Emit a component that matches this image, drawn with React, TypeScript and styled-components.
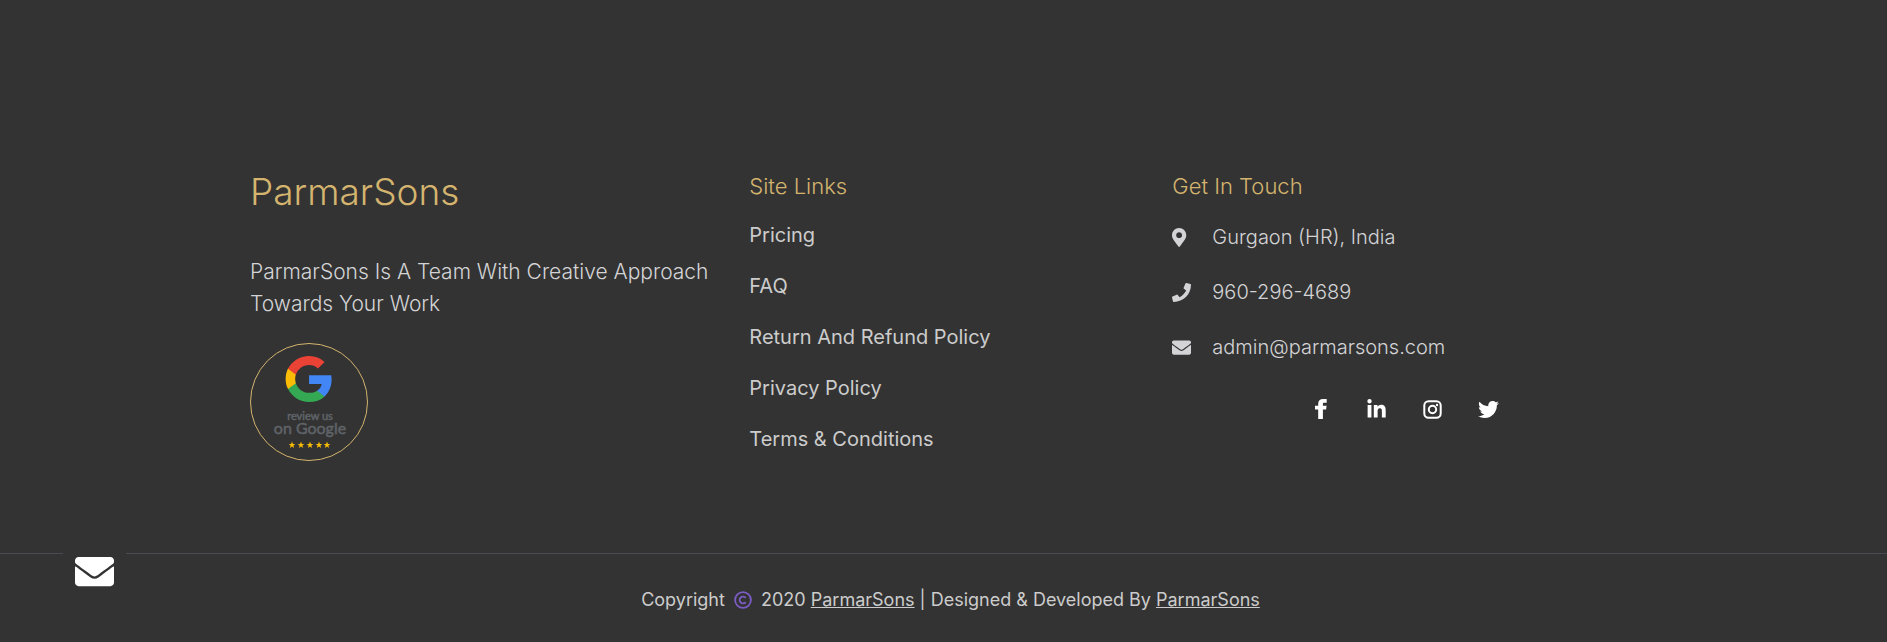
import React from "react";
import styled, { createGlobalStyle } from "styled-components";
import { FaMapMarkerAlt, FaPhone, FaEnvelope, FaLinkedinIn, FaTwitter } from "react-icons/fa";

const GlobalStyle = createGlobalStyle`
  * { box-sizing: border-box; }
  body {
    margin: 0;
    background: #333;
    color: #d4d4d6;
    font-family: Inter, "Liberation Sans", sans-serif;
    font-weight: 300;
  }
  h2, h3, p, ul { margin: 0; padding: 0; font-weight: 300; }
  ul { list-style: none; }
  a { color: inherit; text-decoration: none; }
`;

const Footer = styled.footer`
  padding-top: 168px;
`;

const Columns = styled.div`
  display: grid;
  grid-template-columns: 36% 30.5% 1fr;
  padding: 0 13.25% 92px;
`;

const Brand = styled.h2`
  color: #d4b46e;
  font-size: 37px;
  line-height: 48px;
`;

const About = styled.p`
  margin-top: 40px;
  max-width: 476px;
  font-size: 21px;
  line-height: 32px;
`;

const Badge = styled.a`
  display: block;
  width: 118px;
  height: 118px;
  margin-top: 23px;
  border: 1px solid #d4b46e;
  border-radius: 50%;

  svg { display: block; }
`;

const Heading = styled.h3`
  color: #d4b46e;
  font-size: 22px;
  line-height: 36px;
`;

const Links = styled.ul`
  display: grid;
  gap: 21px;
  margin-top: 16px;
  color: #ccc;
  font-size: 20px;
  font-weight: 400;
  line-height: 30px;
`;

const Contacts = styled.ul`
  display: grid;
  gap: 25px;
  margin-top: 18px;
  font-size: 20px;
  line-height: 30px;
`;

const Contact = styled.li`
  display: grid;
  grid-template-columns: 40px 1fr;
  align-items: center;

  svg {
    display: block;
    width: 19px;
    height: 19px;
  }
`;

const Socials = styled.nav`
  display: flex;
  justify-content: center;
  gap: 36px;
  margin-top: 37px;
  color: #fff;

  a {
    display: flex;
    align-items: center;
    justify-content: center;
    width: 20px;
    height: 20px;
    font-size: 21px;
  }

  svg { flex: none; }
`;

const Bottom = styled.div`
  display: flex;
  justify-content: center;
  padding: 31px 0 26px 14px;
  border-top: 1px solid #4a4a52;
  color: #ccc;
  font-size: 18px;
  line-height: 30px;

  p { font-weight: 400; }
  a { text-decoration: underline; }
`;

const CopyrightIcon = styled.svg`
  margin: 0 4px;
  color: #7a5cc4;
  vertical-align: -3px;
`;

const MailButton = styled.button`
  position: fixed;
  left: 63px;
  bottom: 39px;
  display: grid;
  place-items: center;
  width: 63px;
  height: 63px;
  padding: 0;
  border: 0;
  background: #333;
  color: #fff;
  font-size: 39px;
  cursor: pointer;
`;

const STAR = "M0-3.4L.9-1.1 3.3-1 1.4.5 2.1 2.9 0 1.5-2.1 2.9-1.4.5-3.3-1-.9-1.1z";

function GoogleReview() {
  return (
    <svg width="116" height="116" viewBox="0 0 116 116" role="img" aria-label="Review us on Google">
      <g transform="translate(35 12) scale(.96)">
        <path fill="#4285f4" d="M47.5 24.6c0-1.6-.1-3.1-.4-4.6H24v9.1h13.2c-.6 3-2.3 5.5-4.9 7.2v6h7.9c4.6-4.3 7.3-10.5 7.3-17.7z" />
        <path fill="#34a853" d="M24 48c6.6 0 12.1-2.2 16.2-5.9l-7.9-6c-2.2 1.5-5 2.3-8.3 2.3-6.4 0-11.8-4.3-13.7-10.1H2.1v6.2C6.2 42.6 14.5 48 24 48z" />
        <path fill="#fbbc05" d="M10.3 28.3c-1-3-1-6.2 0-9.2v-6.2H2.1c-3.3 6.8-3.3 14.8 0 21.6z" />
        <path fill="#ea4335" d="M24 9.5c3.6 0 6.8 1.2 9.3 3.6l6.9-6.9C36 2.3 30.5 0 24 0 14.5 0 6.2 5.4 2.1 13.4l8.2 6.2C12.2 13.8 17.6 9.5 24 9.5z" />
      </g>
      <g fill="#5f6368" fontFamily="Lato, sans-serif" textAnchor="middle" stroke="#5f6368" strokeWidth=".5">
        <text x="59" y="76" fontSize="11" fontWeight="400">review us</text>
        <text x="59" y="90" fontSize="16" fontWeight="400">on Google</text>
      </g>
      {[41, 50, 59, 68, 76].map((x) => (
        <path key={x} d={STAR} transform={`translate(${x} 101)`} fill="#fbbc05" />
      ))}
    </svg>
  );
}

function FacebookIcon() {
  return (
    <svg width="12" height="20" viewBox="0 0 12 20" fill="currentColor">
      <path d="M3.2 20V10.6H0V6.8h3.2V4.7C3.2 1.6 5 0 8 0h3.7v3.7H9.2c-1 0-1.3.5-1.3 1.4v1.7h3.7l-.5 3.8H7.9V20z" />
    </svg>
  );
}

function InstagramIcon() {
  return (
    <svg width="19" height="19" viewBox="0 0 19 19" fill="none" stroke="currentColor" strokeWidth="2">
      <rect x="1.3" y="1.3" width="16.4" height="16.4" rx="4.3" />
      <circle cx="9.5" cy="9.5" r="3.7" />
      <circle cx="14" cy="5" r="1.2" fill="currentColor" stroke="none" />
    </svg>
  );
}

function CopyrightMark() {
  return (
    <CopyrightIcon
      width="18"
      height="18"
      viewBox="0 0 18 18"
      fill="none"
      stroke="currentColor"
      strokeWidth="1.8"
      role="img"
      aria-label="copyright"
    >
      <circle cx="9" cy="9" r="7.9" />
      <path d="M11.7 6.9a3.4 3.4 0 1 0 0 4.2" />
    </CopyrightIcon>
  );
}

const siteLinks = ["Pricing", "FAQ", "Return And Refund Policy", "Privacy Policy", "Terms & Conditions"];

const contacts = [
  { icon: <FaMapMarkerAlt preserveAspectRatio="xMinYMid" />, text: "Gurgaon (HR), India" },
  { icon: <FaPhone />, text: <a href="tel:9602964689">960-296-4689</a> },
  { icon: <FaEnvelope />, text: <a href="mailto:admin@parmarsons.com">admin@parmarsons.com</a> },
];

const socials = [
  { label: "Facebook", icon: <FacebookIcon /> },
  { label: "LinkedIn", icon: <FaLinkedinIn /> },
  { label: "Instagram", icon: <InstagramIcon /> },
  { label: "Twitter", icon: <FaTwitter /> },
];

export default function App() {
  return (
    <>
      <GlobalStyle />
      <Footer>
        <Columns>
          <section>
            <Brand>ParmarSons</Brand>
            <About>ParmarSons Is A Team With Creative Approach Towards Your Work</About>
            <Badge href="#review">
              <GoogleReview />
            </Badge>
          </section>
          <section>
            <Heading>Site Links</Heading>
            <Links>
              {siteLinks.map((label) => (
                <li key={label}>
                  <a href="#">{label}</a>
                </li>
              ))}
            </Links>
          </section>
          <section>
            <Heading>Get In Touch</Heading>
            <Contacts>
              {contacts.map((c, i) => (
                <Contact key={i}>
                  {c.icon}
                  <span>{c.text}</span>
                </Contact>
              ))}
            </Contacts>
            <Socials aria-label="Social media">
              {socials.map((s) => (
                <a key={s.label} href="#" aria-label={s.label}>
                  {s.icon}
                </a>
              ))}
            </Socials>
          </section>
        </Columns>
        <Bottom>
          <p>
            Copyright <CopyrightMark /> 2020 <a href="#">ParmarSons</a> | Designed &amp; Developed By{" "}
            <a href="#">ParmarSons</a>
          </p>
        </Bottom>
      </Footer>
      <MailButton type="button" aria-label="Send us a message">
        <FaEnvelope />
      </MailButton>
    </>
  );
}
